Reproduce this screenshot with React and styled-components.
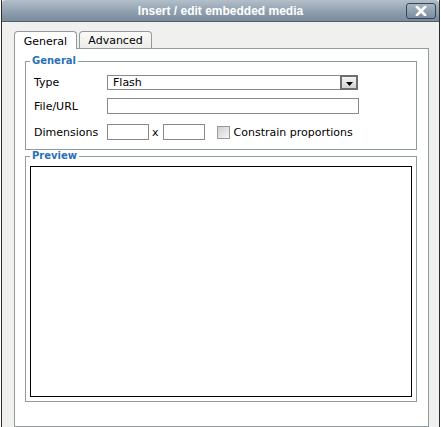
import React from "react";
import styled, { createGlobalStyle } from "styled-components";

const GlobalStyle = createGlobalStyle`
  html, body { margin: 0; padding: 0; background: #ffffff; }
  body { font-family: "DejaVu Sans", Verdana, sans-serif; font-size: 11px; color: #000; }
  * { box-sizing: border-box; }
`;

const Window = styled.div`
  margin-left: 1px;
  width: 439px;
  height: 427px;
  overflow: hidden;
  display: flex;
  flex-direction: column;
  background: #f0f0ee;
  border-left: 1px solid #2e2e2e;
  border-right: 1px solid #2e2e2e;
`;

const TitleBar = styled.div`
  height: 22px;
  flex: 0 0 22px;
  display: flex;
  align-items: center;
  justify-content: center;
  position: relative;
  background: linear-gradient(#b3bfca, #8d9dad 60%, #7a8b9c);
  border-bottom: 1px solid #4f5e6d;
  border-top-left-radius: 4px;
  border-top-right-radius: 4px;
`;

const Title = styled.span`
  font-family: "Liberation Sans", Arial, sans-serif;
  font-weight: bold;
  font-size: 12px;
  color: #ffffff;
`;

const CloseButton = styled.div`
  position: absolute;
  right: 3px;
  top: 3px;
  width: 30px;
  height: 16px;
  border: 1px solid #33475b;
  border-radius: 3px;
  background: linear-gradient(#a9b6c3, #7a8c9e);
  display: flex;
  align-items: center;
  justify-content: center;
`;

const Body = styled.div`
  flex: 1;
  display: flex;
  flex-direction: column;
  padding: 9px 0 0 12px;
`;

const TabRow = styled.div`
  display: flex;
  gap: 2px;
  height: 18px;
  margin-bottom: -1px;
  position: relative;
  z-index: 1;
`;

const Tab = styled.div`
  width: ${(p) => p.$w}px;
  height: ${(p) => (p.$active ? 18 : 17)}px;
  border: 1px solid #919b9c;
  border-bottom: none;
  border-radius: 4px 4px 0 0;
  background: ${(p) => (p.$active ? "#ffffff" : "linear-gradient(#fafaf9, #ecece9)")};
  display: flex;
  align-items: center;
  justify-content: center;
  font-size: 11px;
  color: #000;
  padding-top: 1px;
`;

const Panel = styled.div`
  width: 415px;
  flex: 1;
  background: #ffffff;
  border: 1px solid #919b9c;
  padding: 6px 0 0 10px;
`;

const FieldSet = styled.fieldset`
  margin: 0;
  width: 392px;
  border: 1px solid #919b9c;
  padding: ${(p) => p.$pad};
  min-width: 0;
`;

const Legend = styled.legend`
  padding: 0 2px;
  font-size: 10px;
  line-height: 12px;
  font-weight: bold;
  color: #2b6fb6;
`;

const Rows = styled.div`
  display: flex;
  flex-direction: column;
  padding-left: 4px;
`;

const Row = styled.div`
  display: flex;
  align-items: center;
  height: 16px;
  margin-top: ${(p) => p.$mt || 0}px;
`;

const Label = styled.div`
  width: 73px;
  font-size: 11px;
`;

const Select = styled.div`
  width: 251px;
  height: 15px;
  border: 1px solid #8a8a8a;
  display: flex;
  align-items: center;
  justify-content: space-between;
  padding-left: 5px;
  font-size: 11px;
`;

const DropButton = styled.div`
  width: 18px;
  height: 15px;
  margin-right: -1px;
  border: 2px solid #6e6e6e;
  background: linear-gradient(#f4f4f4, #d2d2d2);
  display: flex;
  align-items: flex-end;
  justify-content: center;
  padding-bottom: 2px;
`;

const TextInput = styled.div`
  width: ${(p) => p.$w}px;
  height: 16px;
  border: 1px solid #8a8a8a;
  background: #fff;
`;

const Times = styled.span`
  margin: 0 4px 0 3px;
  font-size: 11px;
`;

const Checkbox = styled.div`
  width: 13px;
  height: 13px;
  margin-left: 12px;
  margin-right: 4px;
  border: 1px solid #9a9a9a;
  background: linear-gradient(135deg, #cfcfcf, #f6f6f6);
`;

const PreviewBox = styled.div`
  width: 382px;
  height: 231px;
  border: 1px solid #000;
  background: #fff;
`;

export default function App() {
  return (
    <>
      <GlobalStyle />
      <Window>
        <TitleBar>
          <Title>Insert / edit embedded media</Title>
          <CloseButton>
            <svg width="12" height="10" viewBox="0 0 12 10">
              <path d="M2 1 L10 9 M10 1 L2 9" stroke="#ffffff" strokeWidth="2.6" strokeLinecap="square" />
            </svg>
          </CloseButton>
        </TitleBar>
        <Body>
          <TabRow>
            <Tab $active $w={63}>General</Tab>
            <Tab $w={73}>Advanced</Tab>
          </TabRow>
          <Panel>
            <FieldSet $pad="7px 0 9px 4px">
              <Legend>General</Legend>
              <Rows>
                <Row>
                  <Label>Type</Label>
                  <Select>
                    <span>Flash</span>
                    <DropButton>
                      <svg width="7" height="4" viewBox="0 0 7 4">
                        <path d="M0 0 L7 0 L3.5 4 Z" fill="#000" />
                      </svg>
                    </DropButton>
                  </Select>
                </Row>
                <Row $mt={8}>
                  <Label>File/URL</Label>
                  <TextInput $w={252} />
                </Row>
                <Row $mt={10}>
                  <Label>Dimensions</Label>
                  <TextInput $w={42} />
                  <Times>x</Times>
                  <TextInput $w={42} />
                  <Checkbox />
                  <span>Constrain proportions</span>
                </Row>
              </Rows>
            </FieldSet>
            <FieldSet $pad="4px 4px 4px 4px">
              <Legend>Preview</Legend>
              <PreviewBox />
            </FieldSet>
          </Panel>
        </Body>
      </Window>
    </>
  );
}
